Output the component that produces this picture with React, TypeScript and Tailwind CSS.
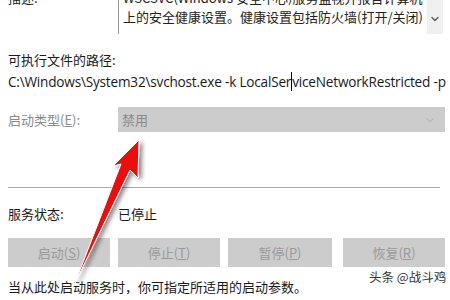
import { ChevronDown } from 'lucide-react';

const cjk = { fontFamily: '"Noto Sans CJK SC", "Noto Sans", sans-serif' };
const latin = { fontFamily: '"Open Sans", "Noto Sans CJK SC", sans-serif' };

export default function App() {
  return (
    <div className="relative w-[450px] h-[300px] overflow-hidden bg-white text-[#1a1a1a]" style={cjk}>
      {/* description box, cut off at top */}
      <div className="h-[34px] overflow-hidden">
        <div className="flex mt-[-12px]">
          <div className="w-[118px] pl-2 text-[13px] leading-[19px]">描述:</div>
          <div className="flex-1 flex border-l border-[#9a9a9a] h-[46px]">
            <div className="flex-1 pl-1 text-[13px] leading-[19px] text-[#222] whitespace-nowrap overflow-hidden">
              <div>WSCSVC(Windows 安全中心)服务监视并报告计算机</div>
              <div>上的安全健康设置。健康设置包括防火墙(打开/关闭)</div>
            </div>
            <div className="w-[16px] mr-[7px] bg-[#f0f0f0] flex items-end justify-center pb-[9px]">
              <ChevronDown className="w-3 h-3 text-[#555]" strokeWidth={2.5} />
            </div>
          </div>
        </div>
      </div>

      <div className="mt-[18px] pl-2 h-[16px] text-[13px] leading-[16px]">可执行文件的路径:</div>
      <div className="mt-[4px] pl-2 h-[20px] text-[13.6px] leading-[20px] whitespace-nowrap tracking-[-0.2px]" style={latin}>
        C:\Windows\System32\svchost.exe -k LocalSer<span className="border-l border-black"></span>viceNetworkRestricted -p
      </div>

      <div className="mt-[15px] flex items-center h-[25px]">
        <div className="w-[118px] pl-2 text-[13px] text-[#8a8a8a]">启动类型(<span className="underline">E</span>):</div>
        <div className="w-[327px] h-full bg-[#cccccc] flex items-center justify-between pl-1 pr-2 text-[13px] text-[#8a8a8a]">
          <span>禁用</span>
          <ChevronDown className="w-3.5 h-3.5 text-[#a8a8a8]" strokeWidth={1.5} />
        </div>
      </div>

      <div className="mt-[55px] ml-2 w-[432px] h-px bg-[#a8a8a8]"></div>

      <div className="mt-[18px] flex items-center h-[16px] text-[13px]">
        <div className="w-[118px] pl-2">服务状态:</div>
        <div>已停止</div>
      </div>

      <div className="mt-[16px] flex h-[29px] pl-2 text-[13px] text-[#9a9a9a]">
        <div className="w-[102px] bg-[#cccccc] flex items-center justify-center">启动(<span className="underline">S</span>)</div>
        <div className="w-[102px] ml-[8px] bg-[#cccccc] flex items-center justify-center">停止(<span className="underline">T</span>)</div>
        <div className="w-[104px] ml-[8px] bg-[#cccccc] flex items-center justify-center">暂停(<span className="underline">P</span>)</div>
        <div className="w-[102px] ml-[11px] bg-[#cccccc] flex items-center justify-center">恢复(<span className="underline">R</span>)</div>
      </div>

      <div className="mt-[12px] pl-2 h-[16px] text-[13px] leading-[16px] whitespace-nowrap">当从此处启动服务时，你可指定所适用的启动参数。</div>

      {/* watermark */}
      <div className="absolute left-[369px] top-[269px] text-[12.5px] leading-[15px] text-[#333] [text-shadow:0_0_2px_#fff]">头条 @战斗鸡</div>

      {/* red arrow */}
      <svg className="absolute left-0 top-0 pointer-events-none" width="450" height="300" viewBox="0 0 450 300">
        <defs>
          <filter id="sh" x="-20%" y="-20%" width="140%" height="140%">
            <feDropShadow dx="3" dy="2" stdDeviation="2" floodColor="#000" floodOpacity="0.45" />
          </filter>
        </defs>
        <polygon
          points="139,140 138,178 130,170 75,283 121,164 113,166"
          fill="#ee1111"
          stroke="#fff"
          strokeWidth="1"
          strokeLinejoin="round"
          filter="url(#sh)"
        />
      </svg>
    </div>
  );
}
